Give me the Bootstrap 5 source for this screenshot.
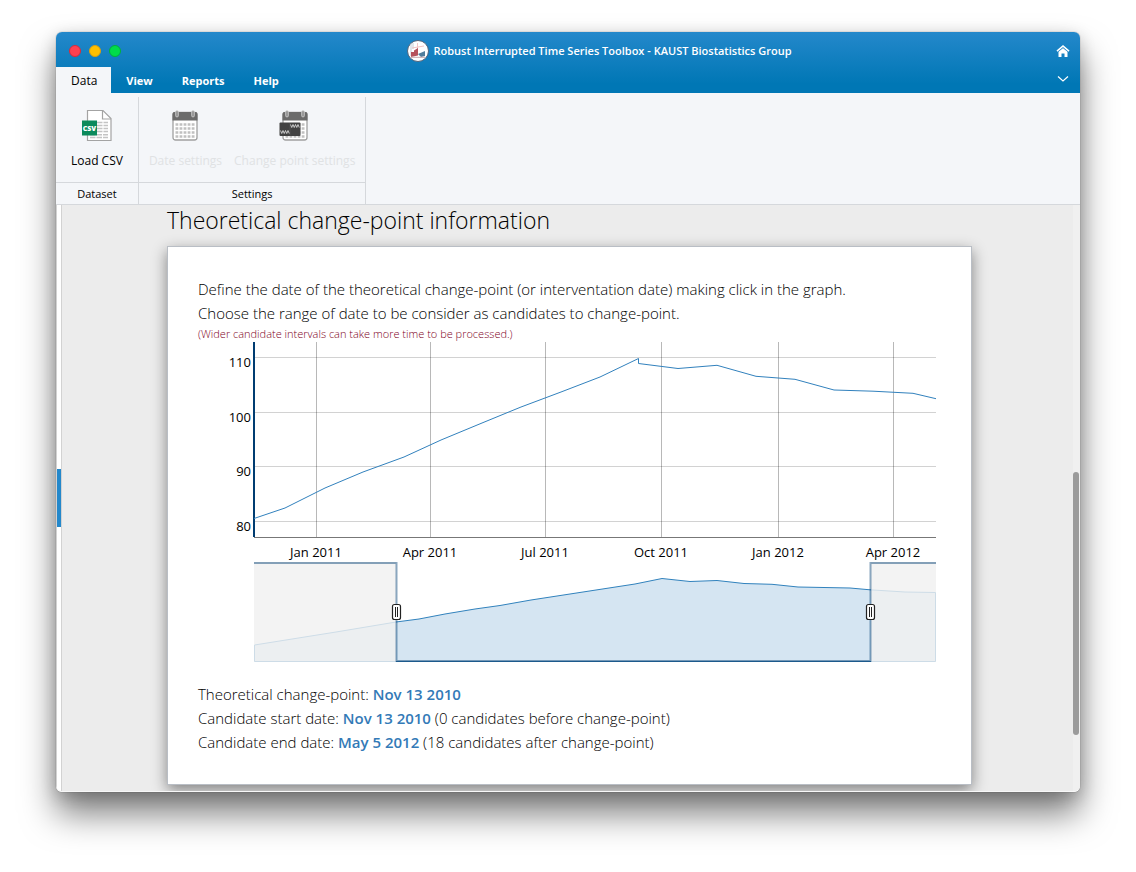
<!DOCTYPE html>
<html lang="en">
<head>
<meta charset="utf-8">
<meta name="viewport" content="width=device-width, initial-scale=1">
<title>Robust Interrupted Time Series Toolbox</title>
<link href="https://cdn.jsdelivr.net/npm/bootstrap@5.3.0/dist/css/bootstrap.min.css" rel="stylesheet">
<style>
body{font-family:"Open Sans","Noto Sans",sans-serif;color:#000;background:#fff;padding:32px 56px 80px}
.app-window{border-radius:6px;overflow:hidden;min-height:calc(100vh - 112px);background:#ececec;border-bottom:1px solid #f8f8f8}
.window-shadow{border-radius:6px;box-shadow:0 0 1px rgba(0,0,0,.6),0 4px 16px rgba(0,0,0,.18),0 22px 34px rgba(0,0,0,.5)}
.app-head{background:linear-gradient(#2488cb,#0077b5 85%);color:#fff}
.title-row{display:grid;grid-template-columns:1fr auto 1fr;height:35px;padding:2px 10px 0 13px}
.title-row h1{font-size:11px;font-weight:600;line-height:16px;margin:0}
.title-box{padding-left:60px}
.dot{width:12px;height:12px;border-radius:50%;border:1px solid;padding:0}
.dot-r{background:#ff4050;border-color:#d92a3a}
.dot-y{background:#ffc000;border-color:#d99f10}
.dot-g{background:#00dc4b;border-color:#00b03c}
.plain{border:0;background:none;padding:0;color:inherit;line-height:1}
.home-btn{padding-bottom:3px}
.fold-btn{padding:0 11px 6px}
.tab-row{height:26px}
.tab-btn{border:0;background:none;color:#fff;font-size:11px;font-weight:700;line-height:24px;padding:2px 14px 0 15px}
.tab-btn.active{background:#f4f6f9;color:#000;font-size:12px;font-weight:400}
.ribbon{background:#f4f6f9;border-bottom:1px solid #d5d8dc;padding-top:4px}
.ribbon-group{border-right:1px solid #d5d8dc}
.ribbon-tools{height:85px;padding:11px 4px 0}
.ribbon-tools button{font-size:12px;line-height:16px;padding:0 6px 3px;border:0;background:none;color:#000;height:64px}
.ribbon-tools .wide-btn{padding:0 11px 3px}
.ribbon-tools button:disabled{color:#e0e2e4}
.ribbon-name{font-size:11px;line-height:20px;border-top:1px solid #d5d8dc;text-align:center;padding-top:1px}
.splitter{width:6px;background:#fff;border:solid #d2d2d2;border-width:0 1px}
.splitter span{width:4px;height:58px;background:#2488cb}
.page-col{width:calc(100% - 32px);max-width:805px}
.page-title{font-size:23px;font-weight:300;line-height:30px;margin:0 0 11px;color:#000}
.sheet{background:#fff;border:1px solid #b9bec5;box-shadow:0 5px 14px rgba(0,0,0,.45);padding:30px}
.sheet p{font-size:15px;font-weight:300;line-height:24px;margin:0}
.sheet p.hint{font-size:11px;line-height:17px;color:#80001c}
.sheet strong{font-weight:600;color:#337ab7}
.readout{padding-top:20px}
.plot{display:block;width:100%;height:auto;font-size:13px}
.scroll-track{width:7px;background:#f0f0f0}
.scroll-thumb{width:6px;height:45%;border-radius:3px;background:#9b9b9b}
.scroll-space{height:45.5%}
</style>
</head>
<body>
<div class="window-shadow">
<div class="app-window d-flex flex-column">
  <header class="app-head">
    <div class="title-row align-items-center">
      <div class="d-flex gap-2 align-items-center">
        <button class="dot dot-r" aria-label="Close"></button>
        <button class="dot dot-y" aria-label="Minimize"></button>
        <button class="dot dot-g" aria-label="Zoom"></button>
      </div>
      <div class="title-box d-flex align-items-center gap-1">
        <svg width="22" height="22" viewBox="0 0 22 22" aria-hidden="true"><circle cx="11" cy="11" r="10.5" fill="#fff" stroke="#52647a"/><path d="M4 4v12M6 3v6" fill="none" stroke="#c5ccd6"/><path d="M10.500 3v9M5 8l12-2" stroke="#f3c4c4" fill="none"/><path d="M4 12h3V10.500L11 8v7.500L4 17z" fill="#b5525c"/><path d="M11 14l7-3v5l-4 1z" fill="#527e9c"/><path d="M4 17.300h14" stroke="#c9a9ad"/></svg>
        <h1>Robust Interrupted Time Series Toolbox - KAUST Biostatistics Group</h1>
      </div>
      <button class="plain home-btn ms-auto" aria-label="Home"><svg width="14" height="12" viewBox="0 0 14 12"><path d="M1 6.200 7 1.200l6 5" fill="none" stroke="#fff" stroke-width="1.700"/><path d="M2.500 6.700 7 3l4.500 3.700V12H8.500V8.500h-3V12h-3z" fill="#fff"/><path d="M2.200 6.500 7 2.600l4.800 3.900" fill="none" stroke="#3b8fca" stroke-width=".6"/></svg></button>
    </div>
    <div class="tab-row d-flex align-items-stretch">
      <nav class="d-flex" aria-label="Ribbon">
        <button class="tab-btn active">Data</button><button class="tab-btn">View</button><button class="tab-btn">Reports</button><button class="tab-btn">Help</button>
      </nav>
      <button class="plain fold-btn ms-auto" aria-label="Collapse ribbon"><svg width="12" height="8" viewBox="0 0 12 8"><path d="M1 1.500l5 4.500 5-4.500" fill="none" stroke="#fff" stroke-width="1.200"/></svg></button>
    </div>
  </header>

  <section class="ribbon d-flex">
    <div class="ribbon-group">
      <div class="ribbon-tools d-flex justify-content-center">
        <button class="wide-btn d-flex flex-column align-items-center justify-content-between">
          <svg width="32" height="34" viewBox="0 0 32 34" aria-hidden="true"><path d="M6.500 2.500H22l8 8v22H6.500z" fill="#fff" stroke="#a3a3a3" stroke-width="1.200"/><path d="M21.500 2.500v8.500H30" fill="none" stroke="#a3a3a3" stroke-width="1.200"/><path d="M16 14.500h11M16 17.500h11M16 20.500h11M16 23.500h11M9 29.500h18M9 26.800h18" stroke="#c4c4c4" stroke-width="1.400" stroke-dasharray="5.500 1"/><path d="M1 12.500h15v15H1z" fill="#0b8a5b"/><text x="8.500" y="22.500" font-size="7" font-weight="800" fill="#fff" text-anchor="middle">CSV</text></svg>
          <span>Load CSV</span>
        </button>
      </div>
      <div class="ribbon-name">Dataset</div>
    </div>
    <div class="ribbon-group">
      <div class="ribbon-tools d-flex">
        <button disabled class="d-flex flex-column align-items-center justify-content-between">
          <svg width="28" height="34" viewBox="0 0 28 34" aria-hidden="true"><defs><g id="calendar"><rect x="2" y="4.500" width="24" height="27.500" rx="2.500" fill="#fff" stroke="#a0a0a0" stroke-width="1.300"/><path d="M1.500 12.500V6a2 2 0 0 1 2-2h21a2 2 0 0 1 2 2v6.500z" fill="#6b6b6b"/><rect x="4.500" y="2.500" width="3" height="6.500" rx="1.500" fill="#9a9a9a" stroke="#d8d8d8" stroke-width=".6"/><rect x="20.500" y="2.500" width="3" height="6.500" rx="1.500" fill="#9a9a9a" stroke="#d8d8d8" stroke-width=".6"/><path d="M4.500 16.500h19M4.500 20.500h19M4.500 24.500h19M4.500 28.500h19" stroke="#c0c0c0" stroke-width="2.600" stroke-dasharray="2.800 1.250"/></g></defs><use href="#calendar"/></svg>
          <span>Date settings</span>
        </button>
        <button disabled class="d-flex flex-column align-items-center justify-content-between">
          <svg width="28" height="34" viewBox="0 0 28 34" overflow="visible" aria-hidden="true"><use href="#calendar"/><rect x="-1.500" y="14.500" width="21" height="13.500" rx="1" fill="#424242"/><path d="M9 15v12.500" stroke="#555" stroke-width=".7"/><path d="M-.5 22.500l1.250 3 1.250-3 1.250 3 1.250-3 1.250 3 1.250-3 1.250 3M9.500 16.500l1.250 3 1.250-3 1.250 3 1.250-3 1.250 3 1.250-3 1.250 3" fill="none" stroke="#e6e6e6" stroke-width=".8"/></svg>
          <span>Change point settings</span>
        </button>
      </div>
      <div class="ribbon-name">Settings</div>
    </div>
  </section>

  <div class="d-flex flex-grow-1">
    <div class="splitter d-flex align-items-center flex-shrink-0"><span></span></div>
    <main class="flex-grow-1 ps-1">
      <div class="page-col mx-auto">
        <h2 class="page-title">Theoretical change-point information</h2>
        <div class="sheet">
          <p>Define the date of the theoretical change-point (or interventation date) making click in the graph.</p>
          <p>Choose the range of date to be consider as candidates to change-point.</p>
          <p class="hint">(Wider candidate intervals can take more time to be processed.)</p>
          <svg class="plot" viewBox="0 0 743 320" role="img" aria-label="Time series with range selector">
            <path d="M56 15.500h682M56 70.500h682M56 124.500h682M56 179.500h682" stroke="#d2d2d2"/>
            <path d="M118.500 0v195M232.500 0v195M347.500 0v195M463.500 0v195M580.500 0v195M695.500 0v195" stroke="#000" stroke-opacity=".28"/>
            <path d="M56 195.500h682" stroke="#777"/>
            <path d="M56 0v195" stroke="#003c71" stroke-width="2"/>
            <polyline fill="none" stroke="#3181bd" points="56,176.500 87,166 127,146 165,130 206,115 243,98 284,81 323,65 363,50 402,35 440.500,16.500 440.500,21.500 480,26.500 519,23.300 558,34.300 597,37.300 636,48 675,49.200 715,51.300 738,56.700"/>
            <g text-anchor="end"><text x="53" y="25">110</text><text x="53" y="80">100</text><text x="53" y="134">90</text><text x="53" y="189">80</text></g>
            <g text-anchor="middle"><text x="118" y="215">Jan 2011</text><text x="232" y="215">Apr 2011</text><text x="347" y="215">Jul 2011</text><text x="463" y="215">Oct 2011</text><text x="580" y="215">Jan 2012</text><text x="695" y="215">Apr 2012</text></g>

            <path d="M56.500 303 138 290 198 280 221 277 247 272 277 267 302 263.500 333 258 385 250 437 242 464 236.500 492 239.500 519 238.500 546 241.500 574 242.300 600 245 652 246 672 247.800 707 250 737.500 250.500V319.500H56.500z" fill="#d5e5f2" stroke="#3182bd"/>
            <path d="M56 220h142v100H56zM673 220h65v100h-65z" fill="#f0f0f0" fill-opacity=".82"/>
            <path d="M56 221h142.500v98h474v-98H738" fill="none" stroke="#003c71" stroke-opacity=".46" stroke-width="2"/>
            <path d="M198 319.500h475" stroke="#1c5a8c"/>
            <g fill="#fff" stroke="#222" stroke-width="1.200"><rect x="194.500" y="262.500" width="8" height="15" rx="2"/><rect x="668.500" y="262.500" width="8" height="15" rx="2"/><path d="M197.500 265v10M199.500 265v10M671.500 265v10M673.500 265v10" stroke-width="1"/></g>
          </svg>
          <div class="readout">
            <p>Theoretical change-point: <strong>Nov 13 2010</strong></p>
            <p>Candidate start date: <strong>Nov 13 2010</strong> (0 candidates before change-point)</p>
            <p>Candidate end date: <strong>May 5 2012</strong> (18 candidates after change-point)</p>
          </div>
        </div>
      </div>
    </main>
    <div class="scroll-track flex-shrink-0"><div class="scroll-space"></div><div class="scroll-thumb"></div></div>
  </div>
</div>
</div>
<script src="https://cdn.jsdelivr.net/npm/bootstrap@5.3.0/dist/js/bootstrap.bundle.min.js"></script>
</body>
</html>
